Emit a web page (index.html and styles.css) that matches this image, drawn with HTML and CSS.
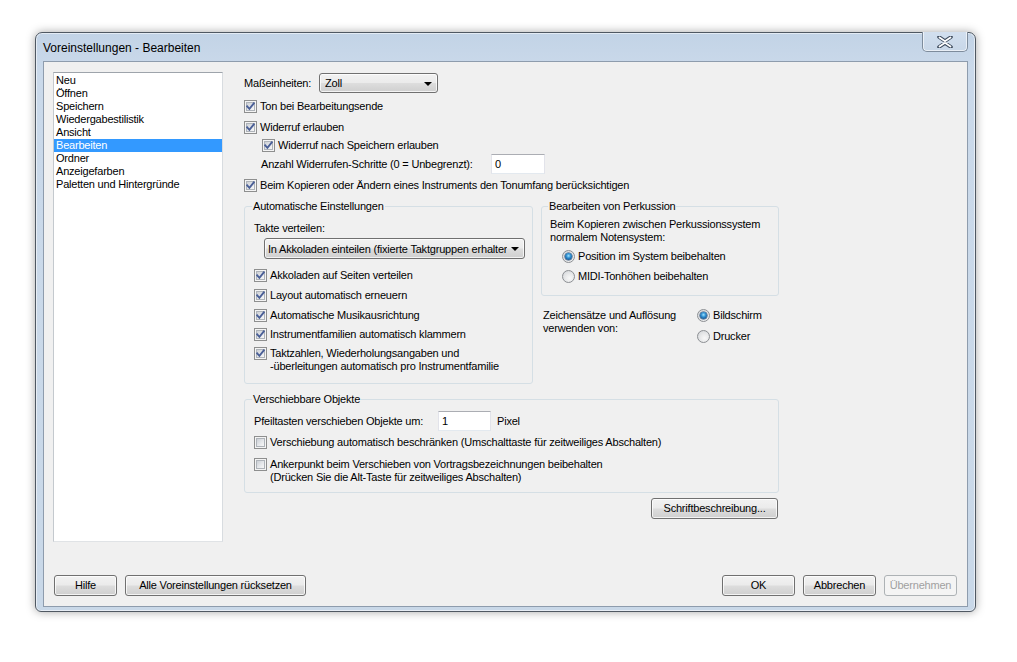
FILE: index.html
```html
<!DOCTYPE html>
<html lang="de">
<head>
<meta charset="utf-8">
<title>Voreinstellungen - Bearbeiten</title>
<link rel="stylesheet" href="styles.css">
</head>
<body>
<div class="window">
  <div class="titlebar">
    <span class="title">Voreinstellungen - Bearbeiten</span>
    <span class="close">
      <svg width="16" height="12" viewBox="0 0 16 12"><path d="M2 1 L8 5 L14 1 M2 11 L8 7 L14 11" stroke="#3c4a5c" stroke-width="3.6" fill="none" stroke-linecap="round"/><path d="M2.5 1.5 L8 5.2 L13.5 1.5 M2.5 10.5 L8 6.8 L13.5 10.5" stroke="#ffffff" stroke-width="1.8" fill="none" stroke-linecap="round"/></svg>
    </span>
  </div>
  <div class="client">
    <div class="main">
      <ul class="listbox">
        <li>Neu</li>
        <li>Öffnen</li>
        <li>Speichern</li>
        <li>Wiedergabestilistik</li>
        <li>Ansicht</li>
        <li class="sel">Bearbeiten</li>
        <li>Ordner</li>
        <li>Anzeigefarben</li>
        <li>Paletten und Hintergründe</li>
      </ul>
      <div class="content">
        <div class="row r-units">
          <span class="lbl-units">Maßeinheiten:</span>
          <span class="combo combo-units"><span class="combo-text">Zoll</span><span class="arrow"></span></span>
        </div>
        <label class="row chk r-ton"><span class="cb on"><svg viewBox="0 0 11 11"><path d="M2.2 5.4 L4.4 7.8 L8.8 2.4" /></svg></span><span>Ton bei Bearbeitungsende</span></label>
        <label class="row chk r-wid"><span class="cb on"><svg viewBox="0 0 11 11"><path d="M2.2 5.4 L4.4 7.8 L8.8 2.4" /></svg></span><span>Widerruf erlauben</span></label>
        <label class="row chk r-widn"><span class="cb on"><svg viewBox="0 0 11 11"><path d="M2.2 5.4 L4.4 7.8 L8.8 2.4" /></svg></span><span>Widerruf nach Speichern erlauben</span></label>
        <div class="row r-anz">
          <span class="lbl-anz">Anzahl Widerrufen-Schritte (0 = Unbegrenzt):</span>
          <span class="input input-anz">0</span>
        </div>
        <label class="row chk r-beim"><span class="cb on"><svg viewBox="0 0 11 11"><path d="M2.2 5.4 L4.4 7.8 L8.8 2.4" /></svg></span><span>Beim Kopieren oder Ändern eines Instruments den Tonumfang berücksichtigen</span></label>

        <div class="groups">
          <fieldset class="grp grp-auto">
            <legend>Automatische Einstellungen</legend>
            <div class="takte">Takte verteilen:</div>
            <span class="combo combo-takte"><span class="combo-text">In Akkoladen einteilen (fixierte Taktgruppen erhalten)</span><span class="arrow"></span></span>
            <label class="row chk a1"><span class="cb on"><svg viewBox="0 0 11 11"><path d="M2.2 5.4 L4.4 7.8 L8.8 2.4" /></svg></span><span>Akkoladen auf Seiten verteilen</span></label>
            <label class="row chk a2"><span class="cb on"><svg viewBox="0 0 11 11"><path d="M2.2 5.4 L4.4 7.8 L8.8 2.4" /></svg></span><span>Layout automatisch erneuern</span></label>
            <label class="row chk a2"><span class="cb on"><svg viewBox="0 0 11 11"><path d="M2.2 5.4 L4.4 7.8 L8.8 2.4" /></svg></span><span>Automatische Musikausrichtung</span></label>
            <label class="row chk a3"><span class="cb on"><svg viewBox="0 0 11 11"><path d="M2.2 5.4 L4.4 7.8 L8.8 2.4" /></svg></span><span>Instrumentfamilien automatisch klammern</span></label>
            <label class="chk two a4"><span class="cb on"><svg viewBox="0 0 11 11"><path d="M2.2 5.4 L4.4 7.8 L8.8 2.4" /></svg></span><span>Taktzahlen, Wiederholungsangaben und<br>-überleitungen automatisch pro Instrumentfamilie</span></label>
          </fieldset>
          <div class="rcol">
            <fieldset class="grp grp-perk">
              <legend>Bearbeiten von Perkussion</legend>
              <div class="perk-text">Beim Kopieren zwischen Perkussionssystem<br>normalem Notensystem:</div>
              <label class="row rad p1"><span class="rb on"></span><span>Position im System beibehalten</span></label>
              <label class="row rad p2"><span class="rb"></span><span>MIDI-Tonhöhen beibehalten</span></label>
            </fieldset>
            <div class="fonts">
              <div class="fonts-text">Zeichensätze und Auflösung<br>verwenden von:</div>
              <div class="fonts-opts">
                <label class="row rad f1"><span class="rb on"></span><span>Bildschirm</span></label>
                <label class="row rad f2"><span class="rb"></span><span>Drucker</span></label>
              </div>
            </div>
          </div>
        </div>

        <fieldset class="grp grp-move">
          <legend>Verschiebbare Objekte</legend>
          <div class="row r-pfeil">
            <span class="lbl-pfeil">Pfeiltasten verschieben Objekte um:</span>
            <span class="input input-pfeil">1</span>
            <span class="pixel">Pixel</span>
          </div>
          <label class="row chk m1"><span class="cb"></span><span>Verschiebung automatisch beschränken (Umschalttaste für zeitweiliges Abschalten)</span></label>
          <label class="chk two m2"><span class="cb"></span><span>Ankerpunkt beim Verschieben von Vortragsbezeichnungen beibehalten<br>(Drücken Sie die Alt-Taste für zeitweiliges Abschalten)</span></label>
        </fieldset>
        <button class="btn btn-schrift">Schriftbeschreibung...</button>
      </div>
    </div>
    <div class="footer">
      <div class="fgroup">
        <button class="btn btn-hilfe">Hilfe</button>
        <button class="btn btn-alle">Alle Voreinstellungen rücksetzen</button>
      </div>
      <div class="fgroup">
        <button class="btn btn-ok">OK</button>
        <button class="btn btn-abbr">Abbrechen</button>
        <button class="btn btn-ueb" disabled>Übernehmen</button>
      </div>
    </div>
  </div>
</div>
</body>
</html>
```
FILE: styles.css
```css
* { box-sizing: border-box; }
html, body { margin: 0; padding: 0; background: #ffffff; }
body {
  font-family: "Liberation Sans", Arial, sans-serif;
  font-size: 11px;
  letter-spacing: -0.2px;
  color: #000;
  width: 1017px;
  height: 662px;
  overflow: hidden;
}

.window {
  margin: 32px 0 0 35px;
  width: 941px;
  height: 580px;
  border: 1px solid #4f5862;
  border-radius: 7px 7px 6px 6px;
  background: linear-gradient(180deg, #c2d3e6 0%, #cad9ea 6%, #c9d8e8 100%);
  box-shadow: 0 0 10px rgba(0,0,0,0.35), inset 0 0 0 1px rgba(255,255,255,0.55);
  padding: 0 7px 4px 7px;
  display: flex;
  flex-direction: column;
}

.titlebar {
  height: 28px;
  display: flex;
  justify-content: space-between;
  align-items: flex-start;
}
.title {
  font-size: 12px;
  letter-spacing: 0;
  line-height: 28px;
  padding-top: 1px;
  color: #000;
}
.close {
  margin-top: -1px;
  width: 46px;
  height: 20px;
  border: 1px solid #7e8c9c;
  border-top: none;
  border-radius: 0 0 5px 5px;
  background: linear-gradient(180deg, #d2dfee 0%, #c8d7e8 100%);
  box-shadow: inset 0 -1px 0 rgba(255,255,255,0.6), inset 1px 0 0 rgba(255,255,255,0.6), inset -1px 0 0 rgba(255,255,255,0.6);
  display: flex;
  align-items: center;
  justify-content: center;
}
.close svg { display: block; margin-top: 1px; }

.client {
  flex: 1;
  background: #f0f0f0;
  border: 1px solid #8e9cad;
  padding: 10px 10px 10px 9px;
  display: flex;
  flex-direction: column;
}

.main {
  display: flex;
  height: 470px;
}

.listbox {
  list-style: none;
  margin: 0;
  padding: 1px 0 0 0;
  width: 170px;
  height: 470px;
  background: #fff;
  border: 1px solid #a5acb5;
  border-color: #9ea4ab #d8dce0 #e0e3e6 #c4c9ce;
}
.listbox li {
  height: 13px;
  line-height: 13px;
  padding-left: 2px;
  white-space: nowrap;
}
.listbox li.sel {
  background: #3399ff;
  color: #fff;
}

.content {
  margin-left: 21px;
  width: 535px;
  display: flex;
  flex-direction: column;
}

.row {
  display: flex;
  align-items: center;
}
.chk, .rad { cursor: default; }
.chk > span:last-child, .rad > span:last-child { white-space: nowrap; }

.r-units { margin-top: 1px; height: 20px; }
.lbl-units { width: 75px; }
.r-ton { margin-top: 4px; height: 18px; }
.r-wid { margin-top: 3px; height: 18px; }
.r-widn { margin-top: 0; height: 18px; padding-left: 18px; }
.r-anz { margin-top: 0; height: 20px; padding-left: 17px; }
.lbl-anz { width: 230px; white-space: nowrap; }
.r-beim { margin-top: 2px; height: 18px; }

/* checkbox */
.cb {
  flex: none;
  width: 13px;
  height: 13px;
  margin-right: 3px;
  border: 1px solid #8e8f8f;
  background: #f4f4f4;
  box-shadow: inset 0 0 0 1px #f4f4f4, inset 0 0 0 2px #aeb3b9;
  position: relative;
}
.cb::before {
  content: "";
  position: absolute;
  left: 2px; top: 2px; right: 2px; bottom: 2px;
  background: linear-gradient(135deg, #cbcfd5 0%, #e6e8eb 55%, #f7f7f7 100%);
}
.cb svg {
  position: absolute;
  left: 0; top: 0;
  width: 11px; height: 11px;
}
.cb svg path {
  fill: none;
  stroke: #4a5f97;
  stroke-width: 1.9;
  stroke-linecap: square;
}

/* radio */
.rb {
  flex: none;
  width: 13px;
  height: 13px;
  margin-right: 3px;
  border-radius: 50%;
  border: 1px solid #8c8f93;
  background: radial-gradient(circle at 60% 65%, #f8f8f8 0%, #e8e9ea 45%, #cfd2d6 100%);
  position: relative;
}
.rb.on::after {
  content: "";
  position: absolute;
  left: 2px; top: 2px;
  width: 7px; height: 7px;
  border-radius: 50%;
  background: radial-gradient(circle at 50% 40%, #9fe2ff 0%, #2f8fd0 40%, #15508c 80%, #1d3f66 100%);
  box-shadow: 0 0 0 0.5px #27476e;
}

/* combos */
.combo {
  display: flex;
  align-items: center;
  height: 20px;
  border: 1px solid #707070;
  border-radius: 3px;
  background: linear-gradient(180deg, #f2f2f2 0%, #ebebeb 48%, #dddddd 52%, #cfcfcf 100%);
  box-shadow: inset 0 0 0 1px rgba(255,255,255,0.75);
  overflow: hidden;
}
.combo-text {
  flex: 1;
  white-space: nowrap;
  overflow: hidden;
}
.arrow {
  flex: none;
  width: 0; height: 0;
  border-left: 4px solid transparent;
  border-right: 4px solid transparent;
  border-top: 4px solid #000;
  margin: 1px 5px 0 4px;
}
.combo-units { width: 119px; padding-left: 5px; }
.combo-takte { width: 261px; height: 21px; margin: 3px 0 0 10px; padding-left: 3px; }

/* inputs */
.input {
  display: flex;
  align-items: center;
  height: 20px;
  background: #fff;
  border: 1px solid #e2e3ea;
  border-top-color: #abadb3;
  border-bottom-color: #e3e9ef;
  padding-left: 3px;
}
.input-anz { width: 54px; }
.input-pfeil { width: 53px; }

/* groups */
.groups {
  margin-top: 6px;
  display: flex;
  gap: 8px;
  align-items: flex-start;
}
.grp {
  margin: 0;
  border: 1px solid #d5dfe5;
  border-radius: 3px;
  padding: 0 8px 9px 9px;
  min-width: 0;
}
.grp legend {
  padding: 0 1px;
  margin-left: -2px;
  line-height: 13px;
  height: 13px;
}
.grp-auto { width: 289px; padding-bottom: 10px; }
.takte { margin-top: 8px; line-height: 14px; }
.a1 { margin-top: 7px; height: 18px; }
.a2 { margin-top: 2px; height: 18px; }
.a3 { margin-top: 1px; height: 18px; }
.two {
  display: flex;
  align-items: flex-start;
  line-height: 13px;
}
.a4 { margin-top: 4px; }

.rcol { width: 238px; display: flex; flex-direction: column; }
.grp-perk { width: 238px; padding: 0 8px 10px 8px; }
.perk-text { margin-top: 5px; line-height: 13px; white-space: nowrap; }
.p1 { margin-top: 3px; height: 18px; padding-left: 12px; }
.p2 { margin-top: 2px; height: 18px; padding-left: 12px; }

.fonts { display: flex; margin-top: 10px; }
.fonts-text { width: 156px; padding-left: 2px; padding-top: 3px; line-height: 13px; white-space: nowrap; }
.fonts-opts { display: flex; flex-direction: column; }
.f1 { height: 18px; }
.f2 { height: 18px; margin-top: 3px; }

.grp-move { width: 535px; margin-top: 9px; padding-bottom: 8px; }
.r-pfeil { margin-top: 5px; height: 20px; }
.lbl-pfeil { width: 184px; white-space: nowrap; }
.pixel { margin-left: 6px; }
.m1 { margin-top: 2px; height: 18px; }
.m2 { margin-top: 7px; }

/* buttons */
.btn {
  font-family: "Liberation Sans", Arial, sans-serif;
  font-size: 11px;
  letter-spacing: -0.2px;
  color: #000;
  height: 21px;
  padding: 0;
  border: 1px solid #707070;
  border-radius: 3px;
  background: linear-gradient(180deg, #f2f2f2 0%, #ebebeb 48%, #dddddd 52%, #cfcfcf 100%);
  box-shadow: inset 0 0 0 1px rgba(255,255,255,0.75);
  text-align: center;
  line-height: 19px;
}
.btn[disabled] {
  color: #a0a0a0;
  border-color: #adb2b5;
  background: #f4f4f4;
  box-shadow: none;
}
.btn-schrift { width: 127px; margin-top: 5px; align-self: flex-end; margin-right: 1px; }

.footer {
  margin-top: 33px;
  display: flex;
  justify-content: space-between;
}
.fgroup { display: flex; gap: 8px; padding-left: 1px; }
.btn-hilfe { width: 63px; }
.btn-alle { width: 181px; }
.btn-ok { width: 73px; }
.btn-abbr { width: 73px; }
.btn-ueb { width: 73px; }
```
